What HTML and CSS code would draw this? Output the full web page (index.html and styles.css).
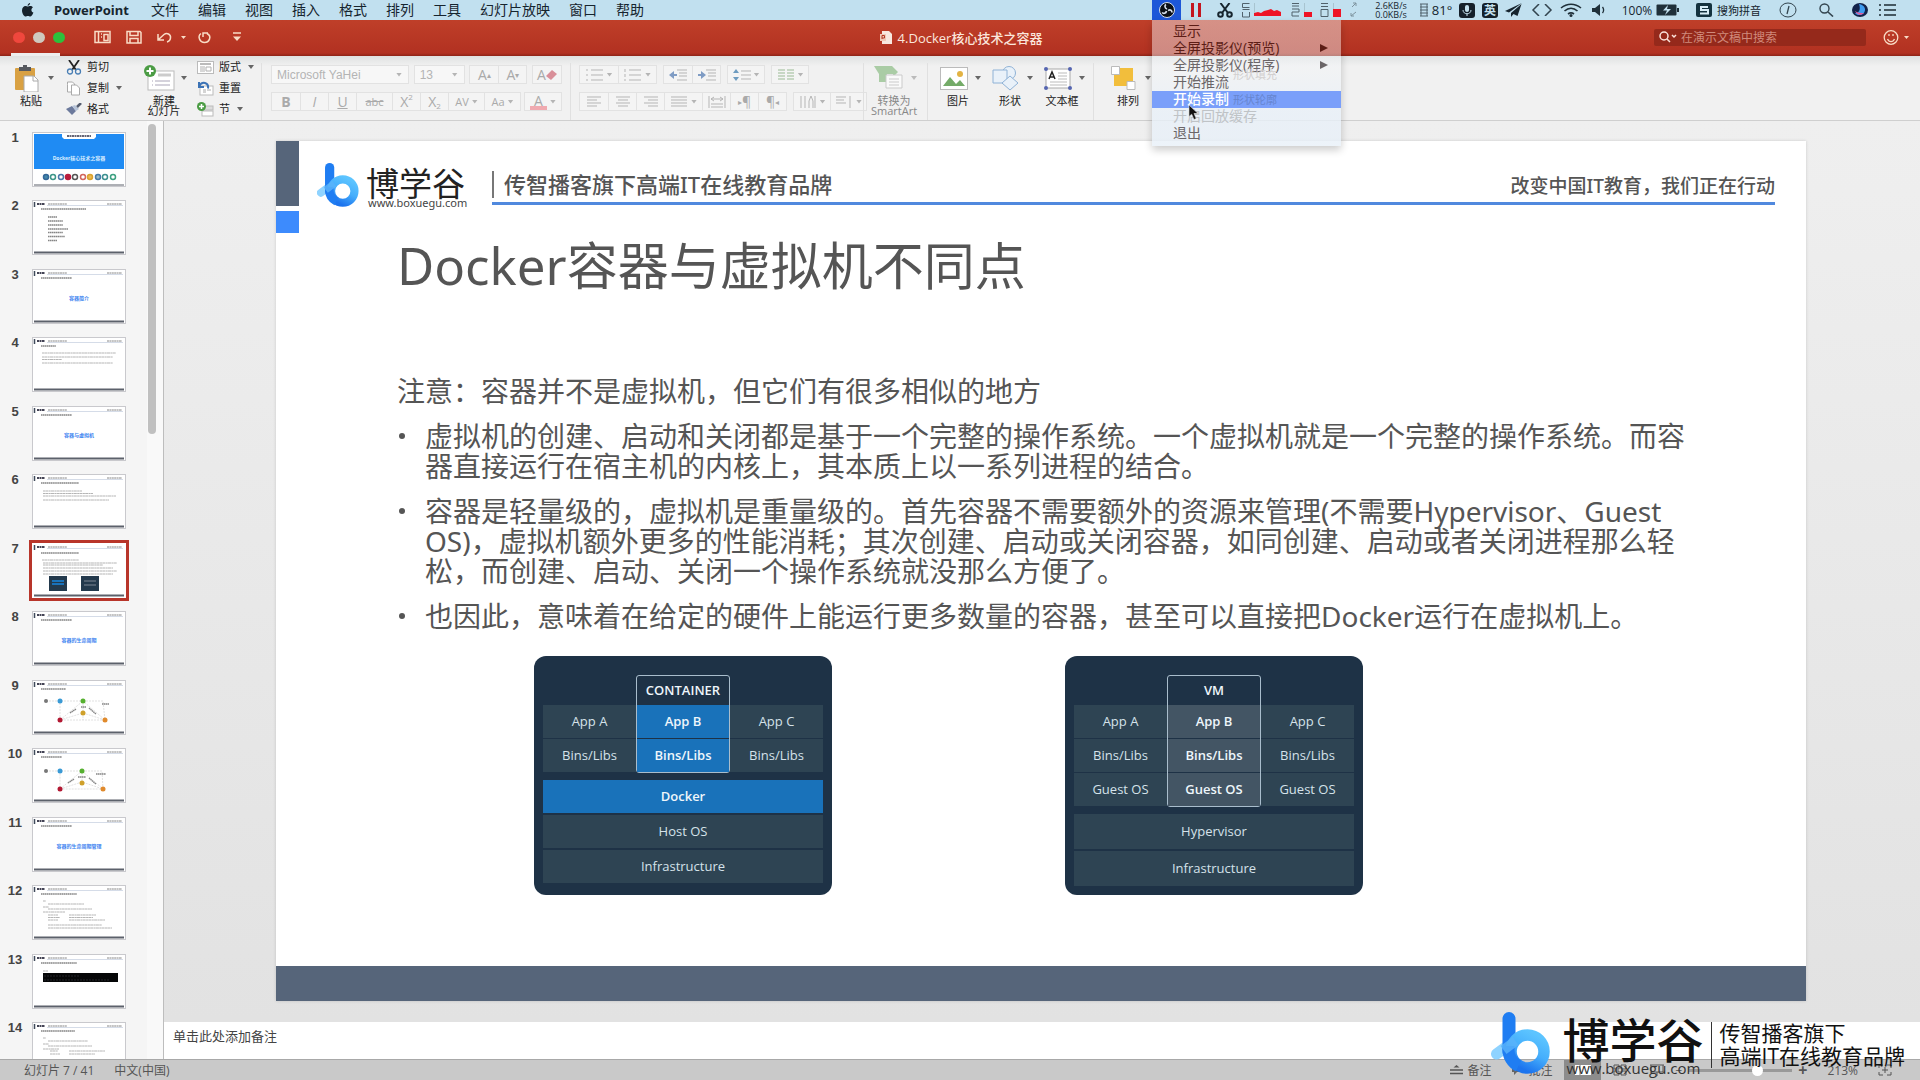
FILE: index.html
```html
<!DOCTYPE html>
<html lang="zh-CN">
<head>
<meta charset="utf-8">
<title>4.Docker核心技术之容器</title>
<link rel="stylesheet" href="styles.css">
</head>
<body>
<svg class="defs" aria-hidden="true">
  <defs>
    <linearGradient id="ring" x1="0.8" y1="0" x2="0.3" y2="1"><stop offset="0" stop-color="#5cc4ff"/><stop offset="0.5" stop-color="#45aefc"/><stop offset="1" stop-color="#1c74ee"/></linearGradient>
    <symbol id="b-logo" viewBox="0 0 60 62">
      <path d="M5 42L24 28" stroke="#8fd3ff" stroke-width="11" stroke-linecap="round"/>
      <path d="M17.500 6.500V40" stroke="#1f7df2" stroke-width="13" stroke-linecap="round"/>
      <circle cx="36" cy="39.500" r="16.500" fill="none" stroke="url(#ring)" stroke-width="11.500"/>
      <path d="M17 34V38A18 18 0 0 0 27 54" fill="none" stroke="#1f7df2" stroke-width="12"/>
      <path d="M12 38L24 29" stroke="#5ab4fb" stroke-width="10" opacity="0.8"/>
    </symbol>
    <symbol id="mini-head" viewBox="0 0 94 55">
      <path d="M2.500 2v5" stroke="#3f4a5a" stroke-width="1.500"/>
      <path d="M5 4h8" stroke="#445" stroke-width="2" stroke-dasharray="2 .5"/>
      <path d="M16 4h19M75 4h15" stroke="#888" stroke-width="1" stroke-dasharray="2 .4"/>
      <path d="M15 5.500h76" stroke="#b9c4d8" stroke-width=".6"/>
      <path d="M2 52.500h90" stroke="#5c616b" stroke-width="2"/>
    </symbol>
  </defs>
</svg>

<header class="menubar">
  <svg class="apple" viewBox="0 0 14 14"><path d="M9.600 0c.1 1.300-1.100 2.700-2.500 2.700C7 1.400 8.300.1 9.600 0zM7.200 3.600c.6 0 1.400-.6 2.600-.6 1 0 2 .5 2.600 1.400-2.200 1.300-1.800 4.300.5 5.200-.5 1.600-1.700 3.900-3 3.900-1 0-1.300-.6-2.500-.6s-1.600.6-2.500.6C3.400 13.600 1.500 10.400 1.500 7.600 1.500 4.700 3.300 3.100 5 3.100c1 0 1.700.5 2.200.5z" fill="#16222b"/></svg>
  <nav class="menus">
    <button class="app">PowerPoint</button><button>文件</button><button>编辑</button><button>视图</button><button>插入</button><button>格式</button><button>排列</button><button>工具</button><button>幻灯片放映</button><button>窗口</button><button>帮助</button>
  </nav>
  <div class="tray">
    <div class="cell obs">
      <svg width="18" height="16" viewBox="0 0 18 16"><circle cx="9" cy="8" r="7.500" fill="#0b1016" stroke="#d5deea" stroke-width="1"/><path d="M9 7C6.500 6 6.500 3.500 8 2.500M10 8.500c2.500-1.500 4 0 4 2M8.500 9c-.5 2.500-3 3-4.500 1.500" fill="none" stroke="#d5deea" stroke-width="1.700"/></svg>
      <div class="dropdown" role="menu">
        <span class="ghost ghost-a">形状填充</span><span class="ghost ghost-c">形状轮廓</span>
        <button role="menuitem" class="dark">显示</button>
        <button role="menuitem" class="dark">全屏投影仪(预览)<i class="sub"></i></button>
        <button role="menuitem">全屏投影仪(程序)<i class="sub"></i></button>
        <button role="menuitem">开始推流</button>
        <button role="menuitem" class="active">开始录制</button>
        <button role="menuitem" disabled>开启回放缓存</button>
        <button role="menuitem">退出</button>
        <svg class="cursor" width="11" height="15" viewBox="0 0 11 15"><path d="M1 0v11.500l2.700-2.300L6 14.500l2.200-1L6 8.500h4z" fill="#111" stroke="#ddd" stroke-width=".6"/></svg>
      </div>
    </div>
    <div class="cell pause"><svg width="12" height="14" viewBox="0 0 12 14"><path d="M2.500 0v14M9.500 0v14" stroke="#c4161f" stroke-width="3"/></svg></div>
    <div class="cell cut"><svg width="16" height="15" viewBox="0 0 16 15"><path d="M3.500 0L11 10M12.500 0L5 10" stroke="#17252e" stroke-width="2"/><circle cx="3.500" cy="11.500" r="2.300" fill="none" stroke="#17252e" stroke-width="2"/><circle cx="12.500" cy="11.500" r="2.300" fill="none" stroke="#17252e" stroke-width="2"/></svg></div>
    <div class="cell gauges"><svg width="127" height="20" viewBox="0 0 127 20"><g fill="none" stroke="#51626c" stroke-width="1"><path d="M9.500 3.500h-7v4h7M2.500 9.500h7M2.500 12v5h7V12M52 3.500h7M52 6h7M52 9h7v3h-7v4h7M81 3.500h7M81 6.500h7M81 9.500h7v7h-7z"/><path d="M112 7l4-4M113 3h3v3M116 12l-5 4M111 13v3h3" stroke="#7d929d"/></g><path d="M14 16v-3l4-1 3 1 3-2 4-1 3-1 3 2 3-1 4 2v4z" fill="#ee1426"/><path d="M64 12h8v5h-8zM93 9h8v8h-8z" fill="#ee1426"/><path d="M14.500 3v10M64.500 3v9M93.500 3v6" stroke="#a8c4d0"/></svg></div>
    <div class="cell speed"><span>2.6KB/s</span><span>0.0KB/s</span></div>
    <div class="cell temp"><svg width="8" height="14" viewBox="0 0 8 14"><path d="M0 1h8M0 4h8M0 7h8M0 10h8M0 13h8M1 1v12M7 1v12" stroke="#51626c" stroke-width="1"/></svg>81°</div>
    <div class="cell mic"><svg width="16" height="15" viewBox="0 0 16 15"><rect width="16" height="15" rx="3" fill="#15202a"/><rect x="6" y="2" width="4" height="7" rx="2" fill="#c3e0ee"/><path d="M4 7c0 5 8 5 8 0M8 11v2" fill="none" stroke="#c3e0ee"/></svg></div>
    <div class="cell ying"><b>英</b></div>
    <div class="cell plane"><svg width="18" height="14" viewBox="0 0 18 14"><path d="M17 0L0 8l4 1.500zM16.500 1L6 10v4l2.500-3 4 2z" fill="#16242e"/></svg></div>
    <div class="cell code"><svg width="22" height="12" viewBox="0 0 22 12"><path d="M8 0L2 6l6 6M14 0l6 6-6 6" fill="none" stroke="#33444e" stroke-width="1.500"/></svg></div>
    <div class="cell wifi"><svg width="22" height="14" viewBox="0 0 22 14"><path d="M1 5c6-5 14-5 20 0M4.500 8c4-3.500 9-3.500 13 0M8 11c2-1.500 4-1.500 6 0" fill="none" stroke="#20303a" stroke-width="1.600"/><circle cx="11" cy="12.500" r="1.500" fill="#20303a"/></svg></div>
    <div class="cell spk"><svg width="14" height="12" viewBox="0 0 14 12"><path d="M0 4h3l5-4v12L3 8H0z" fill="#20303a"/><path d="M10.500 3c1.500 2 1.500 4 0 6" fill="none" stroke="#20303a" stroke-width="1.300"/></svg></div>
    <div class="cell batt">100%<svg width="24" height="12" viewBox="0 0 24 12"><rect x=".5" y=".5" width="20" height="11" rx="1" fill="#20303a"/><path d="M22 4v4" stroke="#20303a" stroke-width="2"/><path d="M12 1L7 6.500h4L9 11l6-6h-4z" fill="#c3e0ee"/></svg></div>
    <div class="cell sogou"><svg width="16" height="14" viewBox="0 0 16 14"><rect width="16" height="14" rx="2" fill="#14323f"/><path d="M12 4H5v3h7v3.500H4" fill="none" stroke="#d8eef8" stroke-width="2"/></svg>搜狗拼音</div>
    <div class="cell info"><svg width="18" height="16" viewBox="0 0 18 16"><ellipse cx="9" cy="8" rx="8" ry="7" fill="none" stroke="#33444e"/><path d="M10 4L8 12" stroke="#33444e" stroke-width="1.300"/></svg></div>
    <div class="cell find"><svg width="16" height="14" viewBox="0 0 16 14"><circle cx="6.500" cy="5.500" r="4.500" fill="none" stroke="#33444e" stroke-width="1.400"/><path d="M10 9l5 4.500" stroke="#33444e" stroke-width="1.600"/></svg></div>
    <div class="cell siri"><svg width="16" height="14" viewBox="0 0 16 14"><ellipse cx="8" cy="7" rx="8" ry="7" fill="#12224a"/><path d="M7 1c6 1 8 6 4 10-3 2-7 1-8-1 4 0 6-3 4-9z" fill="#3d9bf0"/><path d="M3 8c2 4 6 5 9 2-3 0-6 0-9-2z" fill="#e35b9c"/></svg></div>
    <div class="cell list"><svg width="18" height="12" viewBox="0 0 18 12"><path d="M0 1h2M0 6h2M0 11h2M5 1h12M5 6h12M5 11h12" stroke="#1d2b34" stroke-width="1.600"/></svg></div>
  </div>
</header>

<div class="titlebar">
  <div class="title-left">
    <span class="lights"><i class="red"></i><i class="grey"></i><i class="green"></i></span>
    <svg class="quick" width="150" height="14" viewBox="0 0 150 14" fill="none" stroke="#f9dcc6" stroke-width="1.500"><path d="M1 1.500h15v11H1zM4.500 1v12M7 4h1M7 7h1M10 4.500h4v6h-4z"/><path d="M33 1.500h13l1 1v10.500H33zM36 13V8.500h8V13M36 2v3.500h8V2"/><path d="M64 4v6h6M64.500 9.500L70 4.500c3-2.500 7 0 6.500 3.500-.2 2-1.500 3.500-3.500 4"/><path d="M87 6l2.500 3L92 6z" fill="#f9dcc6" stroke="none"/><path d="M107 3.500c-4 3-1 9 3.500 9s8-6 2.500-9M109 7V3h5"/><path d="M139 3h8"/><path d="M139 6.500h8L143 11z" fill="#f9dcc6" stroke="none"/></svg>
  </div>
  <div class="doc-title"><svg width="12" height="13" viewBox="0 0 12 13"><path d="M2 0h7l3 3v10H2z" fill="#f8e7df"/><path d="M0 3h6v7H0z" fill="#f0c9b8"/><path d="M2 8V4.500h2.500V7H2" fill="none" stroke="#b33824"/></svg>4.Docker核心技术之容器</div>
  <div class="title-right">
    <label class="search"><svg width="18" height="12" viewBox="0 0 18 12" fill="none" stroke="#fbe3db" stroke-width="1.500"><circle cx="5" cy="5" r="4"/><path d="M8 8l3 3M13 4l2 2 2-2"/></svg><input type="text" placeholder="在演示文稿中搜索" aria-label="在演示文稿中搜索"></label>
    <svg width="26" height="15" viewBox="0 0 26 15" fill="none" stroke="#f9dcc6" stroke-width="1.300"><circle cx="8" cy="7.500" r="6.800"/><path d="M4.500 9c1.500 3.500 5.500 3.500 7 0M6 4v2M10 4v2"/><path d="M21 6h5l-2.500 3z" fill="#f9dcc6" stroke="none"/></svg>
  </div>
</div>

<div class="ribbon">
  <span class="tab-mark"></span>
  <div class="group clip">
    <button class="big"><span class="ico"><svg width="26" height="27" viewBox="0 0 26 27"><rect x="1" y="3" width="20" height="22" rx="1" fill="#d9a143"/><path d="M5 2h12v4H5z" fill="#575a60"/><path d="M9 0h4v3H9z" fill="#575a60"/><path d="M10 11h10l4 4v12H10z" fill="#fff" stroke="#aaa"/><path d="M19 11v5h5" fill="none" stroke="#aaa"/></svg></span><i class="car"></i><span class="lab">粘贴</span></button>
    <div class="stack">
      <button><svg width="16" height="15" viewBox="0 0 16 15"><path d="M3 0l7 10M13 0L6 10" stroke="#222" stroke-width="1.800"/><circle cx="4" cy="11.500" r="2.500" fill="none" stroke="#4a7fb5" stroke-width="1.300"/><circle cx="12" cy="11.500" r="2.500" fill="none" stroke="#4a7fb5" stroke-width="1.300"/></svg>剪切</button>
      <button><svg width="16" height="15" viewBox="0 0 16 15" fill="#fff" stroke="#aaa"><path d="M1.500 3.500V1h5l2 2v8h-7z"/><path d="M5.500 4h5l3 3v7h-8z"/></svg>复制<i class="car"></i></button>
      <button><svg width="16" height="13" viewBox="0 0 16 13"><path d="M0 6l6-3 4 5-4 4z" fill="#6c7a9c"/><path d="M6 3l3-1 4 4-3 2z" fill="#b6c3d8"/><path d="M11 4l4-4" stroke="#555d70" stroke-width="2.500"/></svg>格式</button>
    </div>
  </div>
  <div class="group slides">
    <button class="big"><span class="ico"><svg width="32" height="26" viewBox="0 0 32 26"><rect x="4" y="6" width="26" height="19" fill="#fff" stroke="#bbb"/><path d="M14 10h13" stroke="#ccc" stroke-width="3"/><path d="M11 16h15M11 20h15M8 16h1M8 20h1" stroke="#aaa5b8"/><circle cx="6" cy="6" r="6" fill="#4b9c44"/><path d="M6 2.500v7M2.500 6h7" stroke="#fff" stroke-width="2"/></svg></span><i class="car"></i><span class="lab">新建<br>幻灯片</span></button>
    <div class="stack">
      <button><svg width="17" height="13" viewBox="0 0 17 13"><rect x=".5" y=".5" width="16" height="12" fill="#fff" stroke="#bbb"/><path d="M3 3h11" stroke="#bbb" stroke-width="2"/><path d="M3 6h5M3 8h5M3 10h5M9 6h5v4H9z" stroke="#b0b0b0" fill="none"/></svg>版式<i class="car"></i></button>
      <button><svg width="17" height="15" viewBox="0 0 17 15"><rect x="3" y="5" width="13" height="9" fill="#fff" stroke="#bbb"/><path d="M6 9h3M6 11h3M10 9h4" stroke="#aaa"/><path d="M2 1v5h5M2 5.500c3-6 10-4 9 2" fill="none" stroke="#3b72b5" stroke-width="2"/></svg>重置</button>
      <button><svg width="17" height="15" viewBox="0 0 17 15"><rect x="5" y="4" width="11" height="4" fill="#ddd" stroke="#bbb"/><rect x="5" y="9" width="11" height="5" fill="#fff" stroke="#bbb"/><circle cx="4.500" cy="4.500" r="4.500" fill="#4b9c44"/><path d="M4.500 2v5M2 4.500h5" stroke="#fff" stroke-width="1.500"/></svg>节<i class="car"></i></button>
    </div>
  </div>
  <div class="group off">
    <div class="line">
      <span class="combo face"><select aria-label="字体" disabled><option>Microsoft YaHei</option></select><i class="car"></i></span>
      <span class="combo size"><select aria-label="字号" disabled><option>13</option></select><i class="car"></i></span>
      <span class="seg"><button class="w28 ltr" disabled>A<small>▴</small></button><button class="w28 ltr" disabled>A<small>▾</small></button></span>
      <span class="seg"><button class="w28 ltr" disabled>A<svg width="11" height="10" viewBox="0 0 11 10"><path d="M0 6l6-6 5 4-6 6z" fill="#d98f99"/></svg></button></span>
    </div>
    <div class="line">
      <span class="seg"><button class="w28 ltr" disabled><b>B</b></button><button class="w28 ltr" disabled><em>I</em></button><button class="w28 ltr" disabled><u>U</u></button><button class="w36" disabled><s>abc</s></button><button class="w28 ltr" disabled>X<sup>2</sup></button><button class="w28 ltr" disabled>X<sub>2</sub></button><button class="w36" disabled>AV<i class="car"></i></button><button class="w36" disabled>Aa<i class="car"></i></button></span>
      <span class="seg"><button class="w36 ltr fontcol" disabled><span>A</span><i class="car"></i></button></span>
    </div>
  </div>
  <div class="group off para">
    <div class="line">
      <span class="seg"><button class="w38" disabled><svg class="li" viewBox="0 0 18 12"><path d="M0 1h2M0 6h2M0 11h2M5 1h12M5 6h12M5 11h12"/></svg><i class="car"></i></button><button class="w38" disabled><svg class="li" viewBox="0 0 18 12"><path d="M1 0v3M1 5v3M1 10v2M5 1h12M5 6h12M5 11h12"/></svg><i class="car"></i></button></span>
      <span class="seg"><button class="w28" disabled><svg class="li" viewBox="0 0 18 12"><path d="M8 1h10M10 4h8M10 7h8M8 11h10"/><path d="M0 6l5-4v3h3v2H5v3z" fill="#7f9cc4" stroke="none"/></svg></button><button class="w28" disabled><svg class="li" viewBox="0 0 18 12"><path d="M8 1h10M10 4h8M10 7h8M8 11h10"/><path d="M8 6L3 2v3H0v2h3v3z" fill="#7f9cc4" stroke="none"/></svg></button></span>
      <span class="seg"><button class="w36" disabled><svg class="li" viewBox="0 0 18 12"><path d="M8 2h10M8 6h10M8 10h10"/><path d="M3 0l3 4H0zM3 12L0 8h6z" fill="#6e9cc0" stroke="none"/></svg><i class="car"></i></button></span>
      <span class="seg"><button class="w36" disabled><svg class="li" viewBox="0 0 18 12"><path d="M1 1h7M1 4h7M1 7h7M1 10h7M10 1h7M10 4h7M10 7h7M10 10h7" stroke="#9aba94"/></svg><i class="car"></i></button></span>
    </div>
    <div class="line">
      <span class="seg"><button class="w28" disabled><svg class="li" viewBox="0 0 18 12"><path d="M2 1h14M2 4h10M2 7h14M2 10h10"/></svg></button><button class="w28" disabled><svg class="li" viewBox="0 0 18 12"><path d="M2 1h14M4 4h10M2 7h14M4 10h10"/></svg></button><button class="w28" disabled><svg class="li" viewBox="0 0 18 12"><path d="M2 1h14M6 4h10M2 7h14M6 10h10"/></svg></button><button class="w38" disabled><svg class="li" viewBox="0 0 18 12"><path d="M1 1h16M1 4h16M1 7h16M1 10h16"/></svg><i class="car"></i></button><button class="w28" disabled><svg class="li" viewBox="0 0 18 12"><path d="M1 0v12M17 0v12M3 3h12M6 1L3 3l3 2M12 1l3 2-3 2M3 8h12M3 11h12"/></svg></button><button class="w28 ltr" disabled><small>▸</small>¶</button><button class="w28 ltr" disabled>¶<small>◂</small></button></span>
      <span class="seg"><button class="w36" disabled><svg class="li" viewBox="0 0 18 12"><path d="M2 0v12M6 0v12M10 12V5l2-5 2 5v7M16 0v12"/></svg><i class="car"></i></button><button class="w36" disabled><svg class="li" viewBox="0 0 18 12"><path d="M1 1h10M1 4h8M1 7h10M15 0v12"/></svg><i class="car"></i></button></span>
    </div>
  </div>
  <div class="group art"><button class="big faded" disabled><span class="ico"><svg width="32" height="24" viewBox="0 0 32 24"><path d="M0 0h18l6 6-5 5v-3h-6v8H5V8z" fill="#8dbd86"/><path d="M12 9h16v13H12z" fill="#fff" stroke="#bbb"/><path d="M15 13h10M15 16h10M15 19h10" stroke="#bbb"/></svg></span><i class="car"></i><span class="lab">转换为<br>SmartArt</span></button></div>
  <div class="group insert">
    <button class="big"><span class="ico"><svg width="28" height="23" viewBox="0 0 28 23"><rect x=".5" y=".5" width="27" height="22" fill="#fff" stroke="#bbb"/><path d="M3 19l7-9 6 7 4-4 5 6z" fill="#74ab68"/><circle cx="20" cy="7" r="3" fill="#e3b343"/></svg></span><i class="car"></i><span class="lab">图片</span></button>
    <button class="big"><span class="ico"><svg width="28" height="25" viewBox="0 0 28 25" fill="#e9f1f9" stroke="#8fb2d6"><circle cx="17" cy="7" r="6.500"/><path d="M1 4h14v13H1z"/><path d="M18 10l8 7-8 7-8-7z"/></svg></span><i class="car"></i><span class="lab">形状</span></button>
    <button class="big"><span class="ico"><svg width="28" height="23" viewBox="0 0 28 23"><rect x="2" y="2" width="24" height="19" fill="#fff" stroke="#aaa"/><g fill="#5565b0"><circle cx="2" cy="2" r="2"/><circle cx="26" cy="2" r="2"/><circle cx="2" cy="21" r="2"/><circle cx="26" cy="21" r="2"/></g><path d="M5 12L8 5l3 7M6 10h4" stroke="#222" fill="none" stroke-width="1.500"/><path d="M14 6h9M14 9h9M14 12h9M6 15h17M6 18h17" stroke="#bbb"/></svg></span><i class="car"></i><span class="lab">文本框</span></button>
  </div>
  <div class="group arrange"><button class="big"><span class="ico"><svg width="26" height="24" viewBox="0 0 26 24"><rect x="3" y="2" width="19" height="18" fill="#f2be3c"/><path d="M.500.500h8v8h-8zM16 15.500h8v8h-8z" fill="#fff" stroke="#bbb"/></svg></span><i class="car"></i><span class="lab">排列</span></button></div>
</div>

<main class="work">
  <aside class="panel">
    <ol class="thumbs">
      <li><span>1</span><svg viewBox="0 0 94 55"><path d="M2 2h90v35H2z" fill="#1f8bf3"/><path d="M30 1h34v4l-2 2H32l-2-2z" fill="#fff"/><path d="M35 4h24" stroke="#667" stroke-width="2" stroke-dasharray="2 .5"/><text x="47" y="28" class="cap white">Docker核心技术之容器</text><g fill="none" stroke-width="1.500"><circle cx="14" cy="45" r="2.500" stroke="#336698" fill="#48a"/><circle cx="21" cy="45" r="2.500" stroke="#3c9688"/><circle cx="29" cy="45" r="2.500" stroke="#4a78a8"/><circle cx="36" cy="45" r="2.500" stroke="#b91d3e" fill="#b91d3e"/><circle cx="43" cy="45" r="2.500" stroke="#555"/><circle cx="51" cy="45" r="2.500" stroke="#d2655c"/><circle cx="58" cy="45" r="2.500" stroke="#d9a12e" fill="#eb5"/><circle cx="66" cy="45" r="2.500" stroke="#467aa8" fill="#9bc"/><circle cx="73" cy="45" r="2.500" stroke="#3c9090"/><circle cx="81" cy="45" r="2.500" stroke="#3ca080"/></g><path d="M2 53h90" stroke="#5c616b"/></svg></li>
      <li><span>2</span><svg viewBox="0 0 94 55"><use href="#mini-head"/><path class="t2" d="M9 9h45M16 17h9M16 21h15M16 25h15M16 29h20M16 32.500h15M16 36.500h17M16 40.500h9"/></svg></li>
      <li><span>3</span><svg viewBox="0 0 94 55"><use href="#mini-head"/><path class="t2" d="M9 9h31"/><text x="47" y="31" class="cap">容器简介</text></svg></li>
      <li><span>4</span><svg viewBox="0 0 94 55"><use href="#mini-head"/><path class="t2" d="M9 9h15"/><path class="t1" d="M10 16h74M10 20h71M10 22.500h20M10 26h71"/></svg></li>
      <li><span>5</span><svg viewBox="0 0 94 55"><use href="#mini-head"/><path class="t2" d="M9 9h31"/><text x="47" y="31" class="cap">容器与虚拟机</text></svg></li>
      <li><span>6</span><svg viewBox="0 0 94 55"><use href="#mini-head"/><path class="t2" d="M9 9h38"/><path class="t1" d="M11 17h39M11 19.500h50M11 22h73M11 26h66"/></svg></li>
      <li class="current"><span>7</span><svg viewBox="0 0 94 55"><use href="#mini-head"/><path class="t2" d="M9 10h38"/><path class="t1" d="M10 17h37M11 20h74M11 22h60M11 25h70M11 28h74M11 31h70"/><path d="M17 33h18v15H17zM49 33h18v15H49z" fill="#23394c"/><path d="M20 38h12M20 41h12" stroke="#1972ba" stroke-width="2"/><path d="M52 38h12M52 42h12" stroke="#506070" stroke-width="2"/></svg></li>
      <li><span>8</span><svg viewBox="0 0 94 55"><use href="#mini-head"/><path class="t2" d="M9 9h31"/><text x="47" y="31" class="cap">容器的生命周期</text></svg></li>
      <li><span>9</span><svg viewBox="0 0 94 55"><use href="#mini-head"/><path class="t2" d="M9 9h25"/><path class="ln" d="M14 21h37l22 19H28V21M28 40l23-19v19M51 21h20l2 19M28 40l23-7 22 7"/><path class="t2" d="M70 24h7M49 27h5M57 28l7 6M38 33l6-4"/><circle cx="14" cy="21" r="2" fill="#777"/><circle cx="28" cy="21" r="2.500" fill="#3a9ad5"/><circle cx="51" cy="21" r="2.500" fill="#56b030"/><circle cx="51" cy="33" r="2.500" fill="#cfa02a"/><circle cx="28" cy="40" r="2.500" fill="#b21832"/><circle cx="73" cy="40" r="2.500" fill="#e08a2c"/></svg></li>
      <li><span>10</span><svg viewBox="0 0 94 55"><use href="#mini-head"/><path class="t2" d="M9 9h21"/><path class="ln" d="M14 23h36l21 18H28V23M28 41l22-18v12M50 23h20l1 18M28 41l22-7 21 7"/><path class="t2" d="M64 26h10M46 29h8M57 30l7 6M36 35l6-4"/><circle cx="14" cy="23" r="2" fill="#777"/><circle cx="28" cy="23" r="2.500" fill="#3a9ad5"/><circle cx="50" cy="23" r="2.500" fill="#56b030"/><circle cx="50" cy="35" r="2.500" fill="#cfa02a"/><circle cx="28" cy="41" r="2.500" fill="#b21832"/><circle cx="71" cy="41" r="2.500" fill="#e08a2c"/></svg></li>
      <li><span>11</span><svg viewBox="0 0 94 55"><use href="#mini-head"/><path class="t2" d="M9 9h31"/><text x="47" y="31" class="cap">容器的生命周期管理</text></svg></li>
      <li><span>12</span><svg viewBox="0 0 94 55"><use href="#mini-head"/><path class="t2" d="M9 9h36"/><path class="t1" d="M11 16h3M16 19h36M11 22h6M16 24h44M11 27h22M16 30h10M37 30h27M16 32.500h12M37 32.500h24M16 35h10M37 35h36M16 40h54M16 43h64"/></svg></li>
      <li><span>13</span><svg viewBox="0 0 94 55"><use href="#mini-head"/><path class="t2" d="M9 9h36"/><path class="t1" d="M11 17h5"/><path d="M11 19h75v9H11z" fill="#050607"/><path d="M12 22h36M12 26h66" stroke="#2b2f33" stroke-dasharray="2 1" stroke-width=".8"/></svg></li>
      <li><span>14</span><svg viewBox="0 0 94 55"><use href="#mini-head"/><path class="t2" d="M9 9h34"/><path class="t1" d="M11 16h3M16 19h40M11 22h6M16 24h44M11 27h16M18 29h8M37 29h36M18 32h10M37 32h26"/></svg></li>
    </ol>
    <div class="scroll"><i></i></div>
  </aside>
  <section class="editor">
    <div class="stage">
      <article class="slide">
        <header class="slide-head">
          <div class="blocks"><i class="slate"></i><i class="blue"></i></div>
          <div class="brand"><svg width="43" height="44"><use href="#b-logo"/></svg><div class="brand-text"><b>博学谷</b><span>www.boxuegu.com</span></div></div>
          <div class="slogans"><p class="slogan">传智播客旗下高端IT在线教育品牌</p><p class="motto">改变中国IT教育，我们正在行动</p></div>
        </header>
        <div class="slide-body">
          <h1>Docker容器与虚拟机不同点</h1>
          <p class="lead">注意：容器并不是虚拟机，但它们有很多相似的地方</p>
          <ul>
            <li>虚拟机的创建、启动和关闭都是基于一个完整的操作系统。一个虚拟机就是一个完整的操作系统。而容<br>器直接运行在宿主机的内核上，其本质上以一系列进程的结合。</li>
            <li>容器是轻量级的，虚拟机是重量级的。首先容器不需要额外的资源来管理(不需要Hypervisor、Guest<br>OS)，虚拟机额外更多的性能消耗；其次创建、启动或关闭容器，如同创建、启动或者关闭进程那么轻<br>松，而创建、启动、关闭一个操作系统就没那么方便了。</li>
            <li>也因此，意味着在给定的硬件上能运行更多数量的容器，甚至可以直接把Docker运行在虚拟机上。</li>
          </ul>
        </div>
        <div class="diagrams">
          <div class="stackbox docker">
            <div class="cols">
              <div class="col"><span>App A</span><span>Bins/Libs</span></div>
              <div class="col mid"><strong>CONTAINER</strong><span>App B</span><span>Bins/Libs</span></div>
              <div class="col"><span>App C</span><span>Bins/Libs</span></div>
            </div>
            <div class="rows"><span class="hot">Docker</span><span>Host OS</span><span>Infrastructure</span></div>
          </div>
          <div class="stackbox vm">
            <div class="cols">
              <div class="col"><span>App A</span><span>Bins/Libs</span><span>Guest OS</span></div>
              <div class="col mid"><strong>VM</strong><span>App B</span><span>Bins/Libs</span><span>Guest OS</span></div>
              <div class="col"><span>App C</span><span>Bins/Libs</span><span>Guest OS</span></div>
            </div>
            <div class="rows"><span>Hypervisor</span><span>Infrastructure</span></div>
          </div>
        </div>
        <footer class="slide-foot"></footer>
      </article>
    </div>
    <input class="notes" type="text" placeholder="单击此处添加备注" aria-label="备注">
  </section>
</main>

<footer class="status">
  <span>幻灯片 7 / 41</span><span>中文(中国)</span>
  <div class="status-right">
    <button><svg width="13" height="10" viewBox="0 0 13 10"><path d="M6.500 0l3 2.500h-6z" fill="#555"/><path d="M0 5h13M0 8.500h13" stroke="#555" stroke-width="1.500"/></svg>备注</button>
    <button><svg width="13" height="10" viewBox="0 0 13 10"><path d="M1 0h11v7H6l-3 3V7H1z" fill="#666"/></svg>批注</button>
    <div class="views"><button class="on" aria-label="普通视图"><svg width="16" height="12" viewBox="0 0 16 12"><path d="M0 1h16v10H0z" fill="#fff"/><path d="M5 1v10" stroke="#888"/></svg></button><button aria-label="浏览视图"><svg width="14" height="12" viewBox="0 0 14 12"><path d="M1 1h5v4H1zM8 1h5v4H8zM1 7h5v4H1zM8 7h5v4H8z" fill="none" stroke="#555"/></svg></button><button aria-label="放映"><svg width="14" height="12" viewBox="0 0 14 12"><path d="M0 1h14M1 1v7h12V1M7 8v4" fill="none" stroke="#555"/></svg></button></div>
    <div class="zoom"><span>−</span><input type="range" min="0" max="100" value="68" aria-label="缩放"><b>+</b></div>
    <span class="pct">213%</span>
    <button aria-label="适应窗口"><svg width="14" height="12" viewBox="0 0 14 12"><path d="M1 4V1h4M9 1h4v3M13 8v3H9M5 11H1V8M7 3v6M4 6h6" fill="none" stroke="#555"/></svg></button>
  </div>
</footer>

<div class="watermark">
  <svg width="61" height="62"><use href="#b-logo"/></svg>
  <div class="wm-name"><b>博学谷</b><span>www.boxuegu.com</span></div>
  <p>传智播客旗下<br>高端IT在线教育品牌</p>
</div>
</body>
</html>
```
FILE: styles.css
```css
* { box-sizing: border-box; }
body {
  margin: 0; height: 100vh; overflow: hidden; position: relative;
  display: flex; flex-direction: column;
  font-family: "Open Sans", "Noto Sans CJK SC", sans-serif; font-size: 12px; color: #333;
  background: #efefef;
}
button, input, select { font: inherit; color: inherit; border: 0; background: none; padding: 0; margin: 0; }
p, h1, ul, ol { margin: 0; padding: 0; }
svg { display: block; flex: none; }
.defs { position: absolute; width: 0; height: 0; }

/* system menu bar */
.menubar { flex: none; height: 20px; display: flex; align-items: center; background: #c1e0ef; color: #16242e; padding: 0 17px 0 20px; }
.apple { width: 15px; height: 14px; }
.menus { display: flex; gap: 19px; margin-left: 19px; font-size: 14px; line-height: 18px; }
.menus button { white-space: nowrap; height: 20px; }
.menus .app { font-family: "Noto Sans", sans-serif; font-weight: 700; width: 78px; font-size: 13px; text-align: left; }
.tray { margin-left: auto; display: flex; height: 20px; }
.cell { display: flex; align-items: center; justify-content: center; }
.obs { width: 29px; background: #1d57d8; position: relative; }
.pause { width: 29px; } .cut { width: 30px; } .gauges { width: 127px; }
.speed { width: 48px; flex-direction: column; font-size: 9px; line-height: 9px; }
.temp { width: 42px; gap: 4px; font-size: 13px; }
.mic { width: 20px; } .ying { width: 26px; } .plane { width: 22px; } .code { width: 34px; }
.ying b { background: #15202a; color: #c3e0ee; border-radius: 3px; width: 16px; height: 15px; font-size: 12px; line-height: 15px; text-align: center; }
.wifi { width: 24px; } .spk { width: 32px; }
.batt { width: 72px; gap: 4px; font-size: 12px; }
.sogou { width: 83px; gap: 5px; font-size: 11px; }
.info { width: 36px; } .find { width: 40px; } .siri { width: 27px; } .list { width: 30px; }

.dropdown {
  position: absolute; z-index: 5; top: 20px; left: 0; width: 189px; padding: 3px 0 4px;
  display: flex; flex-direction: column;
  background: linear-gradient(rgba(242,245,248,.45) 40%, rgba(232,240,248,.8) 75%);
  box-shadow: 0 4px 8px rgba(0,0,0,.2);
}
.dropdown button { height: 17px; line-height: 15px; font-size: 14px; text-align: left; padding: 0 13px 2px 21px; display: flex; align-items: center; justify-content: space-between; color: #6b6668; white-space: nowrap; }
.dropdown .dark { color: #5c1d16; }
.dropdown .active { background: #7a9ffa; color: #fff; font-weight: 500; }
.dropdown button:disabled { color: #bfc3c6; }
.sub { border: solid transparent; border-width: 4px 0 4px 8px; border-left-color: currentColor; }
.ghost { position: absolute; font-size: 11px; line-height: 12px; color: #d2cfcf; }
.ghost-a { left: 81px; top: 49px; }
.ghost-c { left: 81px; top: 74px; color: #6685cf; z-index: 1; }
.cursor { position: absolute; left: 36px; top: 85px; z-index: 2; }

/* window title */
.titlebar { flex: none; height: 36px; display: grid; grid-template-columns: 1fr auto 1fr; align-items: center; background: linear-gradient(#bf3f29, #b23121 92%, #8e2316); color: #fbe6dc; padding: 0 11px 2px 13px; }
.title-left { display: flex; align-items: center; gap: 29px; }
.lights { display: flex; gap: 8px; }
.lights i { width: 12px; height: 11px; border-radius: 50%; }
.red { background: #f0473d; } .grey { background: #cfc9bf; } .green { background: #2dc03c; }
.doc-title { display: flex; align-items: center; gap: 6px; font-size: 13px; font-weight: 500; }
.title-right { display: flex; align-items: center; justify-content: flex-end; gap: 17px; }
.search { display: flex; align-items: center; gap: 4px; width: 212px; height: 17px; padding-left: 5px; background: #95291b; border-radius: 2px; }
.search input { flex: 1; min-width: 0; font-size: 12px; line-height: 17px; height: 17px; }
.search input::placeholder { color: #d08a7c; opacity: 1; }

/* ribbon */
.ribbon { flex: none; position: relative; height: 65px; display: flex; background: linear-gradient(#dfe1e1, #f1f1f1 10px); border-bottom: 1px solid #cfcfcf; padding-top: 7px; color: #222; }
.tab-mark { position: absolute; left: 11px; top: -3px; width: 49px; height: 3px; background: #eee; }
.group { display: flex; font-size: 11px; }
.group + .group { border-left: 1px solid #e0e0e0; }
.group.slides { border-left: 0; }
.clip { padding-left: 11px; width: 137px; gap: 12px; }
.slides { width: 124px; padding-left: 7px; gap: 10px; }
.big { display: grid; grid-template-columns: 32px 11px; grid-template-rows: 30px auto; align-items: center; align-content: start; }
.ico { display: flex; justify-content: center; }
.lab { line-height: 10px; text-align: center; padding-top: 3px; white-space: nowrap; display: flex; justify-content: center; width: 40px; }
.car { flex: none; width: 6px; height: 4px; margin: 0 0 0 5px; background: #666; clip-path: polygon(0 0, 100% 0, 50% 100%); }
.stack { display: flex; flex-direction: column; gap: 5px; margin-top: -4px; }
.stack button { display: flex; align-items: center; gap: 5px; height: 16px; line-height: 16px; white-space: nowrap; }
.stack .car { margin-left: 2px; }
.off { flex-direction: column; gap: 8px; padding: 2px 8px 0 9px; color: #aaa; width: 309px; }
.off.para { width: 293px; padding-left: 8px; padding-right: 0; }
.line { display: flex; justify-content: space-between; height: 19px; }
.para .line { justify-content: flex-start; gap: 6px; }
.seg, .combo { display: flex; border: 1px solid #e2e2e2; background: #f4f4f4; height: 19px; align-items: center; }
.seg button { height: 17px; line-height: 17px; display: flex; align-items: center; justify-content: center; white-space: nowrap; color: #aaa; }
.seg button + button { border-left: 1px solid #e2e2e2; }
.seg sup, .seg sub { font-size: 8px; line-height: 8px; }
.seg sup { align-self: flex-start; } .seg sub { align-self: flex-end; }
.seg small { font-size: 8px; }
.off .car { background: #b5b5b5; margin-left: 3px; }
.w28 { width: 28px; } .w36 { width: 36px; } .w38 { width: 38px; }
.ltr { font-size: 14px; }
.fontcol span { line-height: 16px; height: 17px; border-bottom: 4px solid #f0aab0; padding: 0 4px; }
.combo { padding: 0 6px 0 5px; justify-content: space-between; background: #f7f7f7; }
.combo select { appearance: none; opacity: 1; color: #b4b4b4; font-family: "Liberation Sans", sans-serif; font-size: 12px; }
.face { width: 138px; } .size { width: 51px; }
.li { width: 18px; height: 12px; fill: none; stroke: #b5b5b5; stroke-width: 1; }
.art { width: 64px; padding-left: 10px; }
.faded { color: #888; } .faded svg { opacity: .7; } .faded .car { background: #bbb; }
.insert { width: 166px; padding-left: 10px; gap: 9px; }
.arrange { padding-left: 14px; }

/* slide list */
.work { flex: 1; min-height: 0; display: flex; }
.panel { flex: none; width: 164px; display: flex; justify-content: space-between; background: #f5f5f5; border-right: 1px solid #bdbdbd; overflow: hidden; }
.thumbs { list-style: none; padding: 11px 0 0 5px; }
.thumbs li { display: flex; gap: 7px; height: 55px; margin-bottom: 13px; }
.thumbs li:nth-child(even) { margin-bottom: 14px; }
.thumbs span { width: 20px; text-align: center; font: 700 13px/12px "Liberation Sans", sans-serif; color: #444; }
.thumbs svg { width: 94px; height: 55px; background: #fff; outline: 1px solid #c9c9cd; outline-offset: -1px; }
.thumbs .current svg { outline: 3px solid #b8352a; outline-offset: 0; }
.cap { font-size: 5px; font-weight: 700; fill: #3b82f0; text-anchor: middle; }
.white { fill: #dcefff; }
.t1 { fill: none; stroke: #a2a2a2; stroke-width: .8; stroke-dasharray: 2 .3 3 .4; }
.t2 { fill: none; stroke: #858585; stroke-width: 1.400; stroke-dasharray: 1.500 .4; }
.ln { fill: none; stroke: #c2c2c2; stroke-width: .5; stroke-dasharray: 2 1; }
.scroll { width: 16px; padding: 3px 0 0 1px; background: #f9f9f9; }
.scroll i { display: block; width: 8px; height: 310px; border-radius: 4px; background: #c0c0c0; }

/* editing area */
.editor { flex: 1; min-width: 0; display: flex; flex-direction: column; }
.stage { flex: 1; min-height: 0; display: flex; padding: 20px 114px 21px 112px; background: linear-gradient(#efefef, #e2e2e2); }
.notes { flex: none; height: 37px; padding: 0 9px 10px; background: #fff; font-size: 13px; }
.notes::placeholder { color: #444; opacity: 1; }
.slide { flex: 1; min-width: 0; display: flex; flex-direction: column; background: #fff; box-shadow: 0 0 3px rgba(0,0,0,.15); color: #555; font-family: "Noto Sans", "Noto Sans CJK SC", sans-serif; }
.slide-head { display: flex; height: 92px; }
.blocks { display: flex; flex-direction: column; justify-content: space-between; width: 23px; }
.slate { height: 65px; background: #56657a; }
.blue { height: 22px; background: #3d8bfd; }
.brand { display: flex; gap: 6px; margin: 22px 0 0 18px; }
.brand-text { display: flex; flex-direction: column; width: 100px; color: #222; }
.brand-text b { font-weight: 400; font-size: 33px; line-height: 42px; }
.brand-text span { font-size: 11px; line-height: 12px; margin-top: -8px; padding-left: 2px; color: #444; }
.slogans { flex: 1; display: flex; justify-content: space-between; align-items: center; height: 39px; margin: 25px 31px 0 26px; border-bottom: 3px solid #5089de; }
.slogan { border-left: 2px solid #777; padding-left: 10px; font-size: 22px; line-height: 27px; font-weight: 500; }
.motto { font-size: 19px; line-height: 24px; font-weight: 500; padding-top: 4px; }
.slide-body { padding: 4px 100px 0 121px; white-space: nowrap; font-size: 28px; line-height: 30px; }
h1 { font-size: 51px; line-height: 56px; font-weight: 400; }
.lead { margin-top: 83px; }
.slide-body ul { list-style: none; }
.slide-body li { position: relative; margin-top: 15px; padding-left: 28px; }
.slide-body li::before { content: ""; position: absolute; left: 2px; top: 12px; width: 6px; height: 6px; border-radius: 50%; background: #555; }
.diagrams { display: flex; gap: 233px; padding: 25px 0 0 258px; }
.stackbox { width: 298px; height: 239px; border-radius: 12px; padding: 19px 9px 0; background: #1e3246; color: #d5e2ea; font: 13px/32px "Open Sans", sans-serif; text-align: center; }
.cols { display: flex; align-items: flex-end; }
.col { flex: 1; display: flex; flex-direction: column; gap: 1px; padding-bottom: 1px; }
.col span, .rows span { background: #2e4453; height: 33px; }
.mid { flex: none; width: 94px; border: 1px solid #a9bdcc; border-radius: 3px; padding: 0; color: #eef6fb; }
.mid span { font-weight: 600; }
.mid strong { font-weight: 600; height: 28px; line-height: 28px; }
.docker .mid span, .docker .hot { background: #1972ba; color: #eef6fb; }
.docker .hot { font-weight: 600; }
.vm .mid span { background: #435564; }
.rows { display: flex; flex-direction: column; gap: 2px; margin-top: 7px; }
.vm .rows span { height: 35px; line-height: 34px; }
.slide-foot { margin-top: auto; height: 35px; background: #56657a; }

/* status bar */
.status { flex: none; height: 21px; display: flex; align-items: center; gap: 20px; padding: 0 28px 0 24px; background: #c9c9c9; border-top: 1px solid #a8a8a8; color: #555; font-size: 12px; }
.status-right { margin-left: auto; display: flex; align-items: center; gap: 20px; }
.status-right button { display: flex; align-items: center; justify-content: center; gap: 4px; height: 20px; }
.views { display: flex; margin: 0 -20px 0 -8px; }
.views button { width: 37px; }
.views .on { background: #8c8c8c; }
.zoom { display: flex; align-items: center; gap: 6px; }
.zoom input { appearance: none; width: 104px; height: 3px; background: #999; }
.zoom input::-webkit-slider-thumb { appearance: none; width: 11px; height: 11px; border-radius: 50%; background: #fff; }
.zoom b { font-size: 16px; line-height: 20px; }

.watermark { position: absolute; right: 15px; bottom: 0; height: 68px; display: flex; color: #111; white-space: nowrap; }
.wm-name { display: flex; flex-direction: column; width: 141px; margin-left: 11px; }
.wm-name b { font-weight: 500; font-size: 47px; line-height: 56px; }
.wm-name span { font-size: 15px; line-height: 16px; margin-top: -8px; padding-left: 4px; color: #333; }
.watermark p { align-self: flex-start; margin: 10px 0 0 7px; padding-left: 8px; border-left: 1px solid #333; font-size: 21px; line-height: 23px; }
```
